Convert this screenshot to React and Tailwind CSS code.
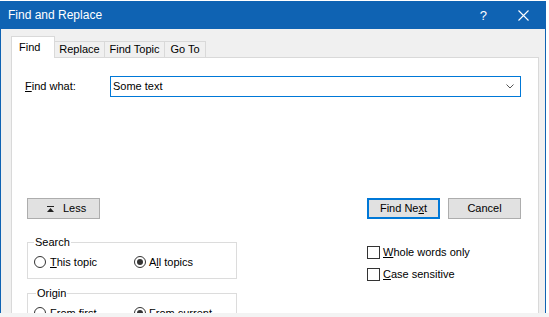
import React from "react";

function Radio({ checked }) {
  return (
    <svg width="12" height="12" viewBox="0 0 12 12" className="shrink-0">
      <circle cx="6" cy="6" r="5.5" fill="#fff" stroke="#333" strokeWidth="1" />
      {checked && <circle cx="6" cy="6" r="3" fill="#333" />}
    </svg>
  );
}

function Check() {
  return <div className="w-[13px] h-[13px] border border-[#333] bg-white shrink-0" />;
}

export default function App() {
  return (
    <div className="w-[549px] h-[317px] bg-white overflow-hidden pt-[1px] font-['Liberation_Sans',Arial,sans-serif] text-[11px] text-black leading-none">
      <div className="w-[546px] h-[312px] border-x border-[#0f63b3] flex flex-col overflow-hidden bg-[#f0f0f0]">
        {/* title bar */}
        <div className="h-[28px] bg-[#0f63b3] flex items-center text-white shrink-0">
          <span className="ml-[7px] text-[12px]">Find and Replace</span>
          <span className="ml-auto text-[13px] mr-[31px]">?</span>
          <svg width="11" height="11" viewBox="0 0 11 11" className="mr-[16px]">
            <path d="M0.5 0.5 L10.5 10.5 M10.5 0.5 L0.5 10.5" stroke="#fff" strokeWidth="1.1" />
          </svg>
        </div>
        {/* body */}
        <div className="flex-1 flex flex-col pl-[10px] pr-[6px]">
          {/* tabs */}
          <div className="h-[28px] flex items-end shrink-0 relative z-10">
            <div className="h-[22px] w-[44px] bg-white border border-b-0 border-[#d9d9d9] -mb-[1px] flex items-start pt-[5px] pl-[7px]">
              Find
            </div>
            <div className="h-[16px] w-[50px] border border-l-0 border-b-0 border-[#d9d9d9] flex items-center justify-center">
              Replace
            </div>
            <div className="h-[16px] w-[60px] border border-l-0 border-b-0 border-[#d9d9d9] flex items-center justify-center">
              Find Topic
            </div>
            <div className="h-[16px] w-[41px] border border-l-0 border-b-0 border-[#d9d9d9] flex items-center justify-center">
              Go To
            </div>
          </div>
          {/* panel */}
          <div className="flex-1 bg-white border border-[#d9d9d9] flex flex-col">
            <div className="flex items-center mt-[18px] pl-[13px] pr-[17px]">
              <span className="w-[85px]">
                <u>F</u>ind what:
              </span>
              <div className="flex-1 h-[21px] border border-[#0078d7] flex items-center pl-[2px] pr-[6px]">
                <span>Some text</span>
                <svg width="8" height="5" viewBox="0 0 8 5" className="ml-auto">
                  <path d="M0.5 0.5 L4 4 L7.5 0.5" fill="none" stroke="#555" strokeWidth="1" />
                </svg>
              </div>
            </div>
            <div className="flex justify-between mt-[101px] pl-[15px] pr-[17px]">
              {/* left column */}
              <div className="w-[210px] flex flex-col">
                <div className="w-[73px] h-[21px] bg-[#e1e1e1] border border-[#adadad] flex items-center pl-[19px] gap-[9px]">
                  <svg width="7" height="6" viewBox="0 0 7 6">
                    <rect x="0" y="0" width="7" height="1" fill="#222" />
                    <path d="M0 6 L7 6 L3.5 2 Z" fill="#222" />
                  </svg>
                  <span>Less</span>
                </div>
                <fieldset className="mt-[16px] border border-[#dcdcdc] h-[44px] px-[6px]">
                  <legend className="px-[1px] h-[14px] leading-[14px]">Search</legend>
                  <div className="flex items-center mt-[7px]">
                    <div className="flex items-center w-[100px]">
                      <Radio />
                      <span className="ml-[4px]">
                        <u>T</u>his topic
                      </span>
                    </div>
                    <div className="flex items-center">
                      <Radio checked />
                      <span className="ml-[3px]">
                        A<u>l</u>l topics
                      </span>
                    </div>
                  </div>
                </fieldset>
                <fieldset className="mt-[7px] border border-[#dcdcdc] h-[44px] px-[6px]">
                  <legend className="ml-[2px] px-[1px] h-[14px] leading-[14px]">Origin</legend>
                  <div className="flex items-center mt-[7px]">
                    <div className="flex items-center w-[100px]">
                      <Radio />
                      <span className="ml-[4px]">
                        <u>F</u>rom first
                      </span>
                    </div>
                    <div className="flex items-center">
                      <Radio checked />
                      <span className="ml-[3px]">From current</span>
                    </div>
                  </div>
                </fieldset>
              </div>
              {/* right column */}
              <div className="w-[154px] flex flex-col">
                <div className="flex gap-[8px]">
                  <div className="w-[73px] h-[21px] bg-[#e1e1e1] border-2 border-[#0078d7] flex items-center justify-center">
                    Find Ne<u>x</u>t
                  </div>
                  <div className="w-[73px] h-[21px] bg-[#e1e1e1] border border-[#adadad] flex items-center justify-center">
                    Cancel
                  </div>
                </div>
                <div className="flex items-center mt-[27px]">
                  <Check />
                  <span className="ml-[3px]">
                    <u>W</u>hole words only
                  </span>
                </div>
                <div className="flex items-center mt-[9px]">
                  <Check />
                  <span className="ml-[3px]">
                    <u>C</u>ase sensitive
                  </span>
                </div>
              </div>
            </div>
          </div>
        </div>
      </div>
      <div className="h-[4px] bg-[#f3f3f3]" />
    </div>
  );
}
